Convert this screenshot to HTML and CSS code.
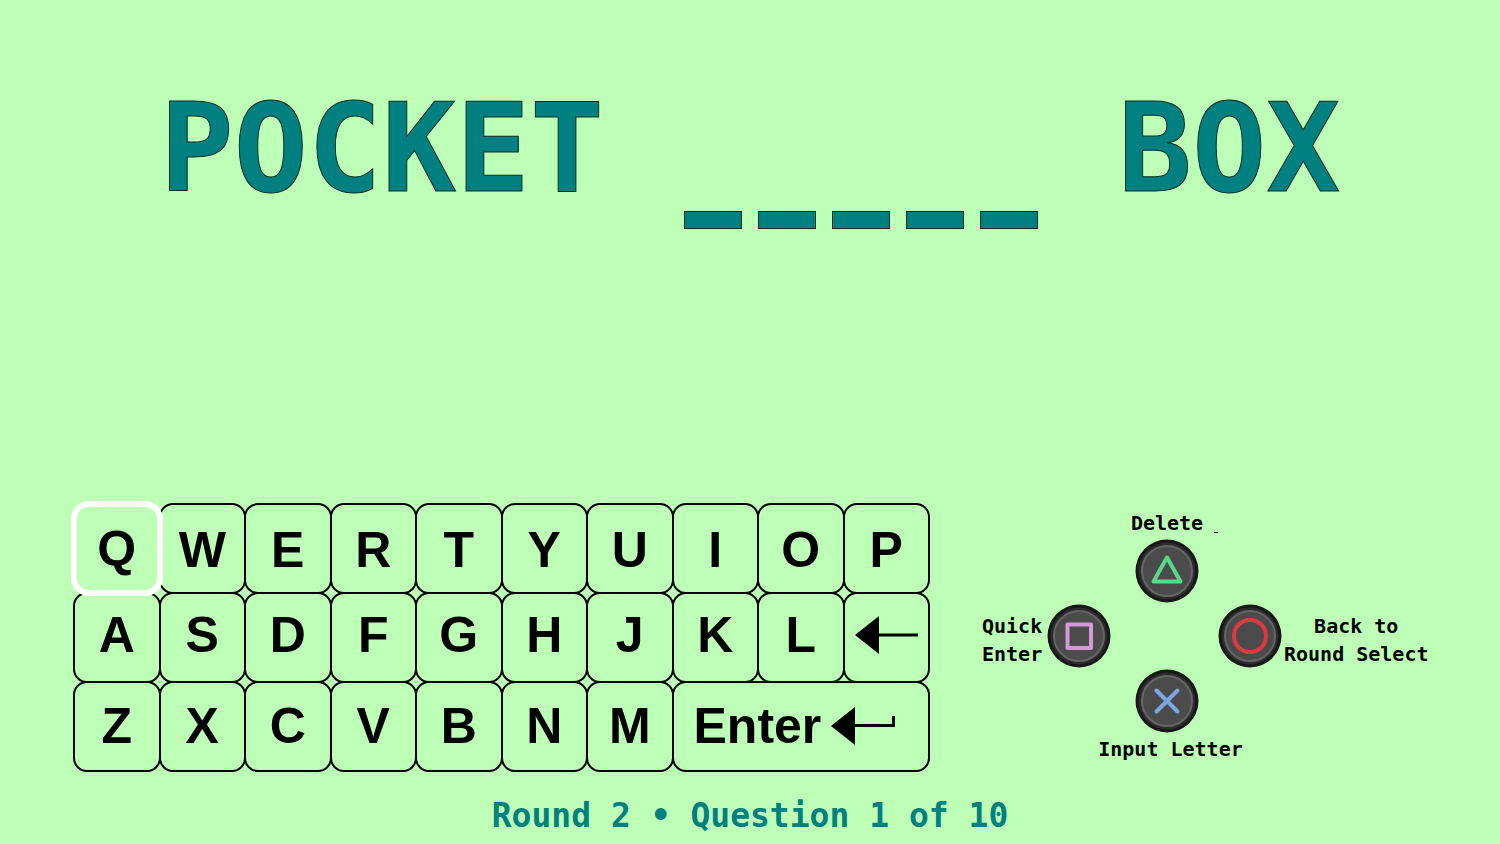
FILE: index.html
```html
<!DOCTYPE html>
<html lang="en">
<head>
  <meta charset="UTF-8" />
  <meta name="viewport" content="width=device-width, initial-scale=1.0"/>
  <title>Round 2</title>
  <link rel="stylesheet" href="styles.css">
</head>
<body>
  <h1 class="puzzle">
    <span>POCKET</span>
    <span class="blanks">
      <i class="blank"></i>
      <i class="blank"></i>
      <i class="blank"></i>
      <i class="blank"></i>
      <i class="blank"></i>
    </span>
    <span>BOX</span>
  </h1>

  <main class="board">
    <div class="keyboard">
      <div class="row row-top">
        <button class="key selected">Q</button>
        <button class="key">W</button>
        <button class="key">E</button>
        <button class="key">R</button>
        <button class="key">T</button>
        <button class="key">Y</button>
        <button class="key">U</button>
        <button class="key">I</button>
        <button class="key">O</button>
        <button class="key">P</button>
      </div>
      <div class="row row-middle">
        <button class="key">A</button>
        <button class="key">S</button>
        <button class="key">D</button>
        <button class="key">F</button>
        <button class="key">G</button>
        <button class="key">H</button>
        <button class="key">J</button>
        <button class="key">K</button>
        <button class="key">L</button>
        <button class="key" aria-label="Backspace">
          <svg class="arrow" width="63" height="38" viewBox="0 0 63 38">
            <path d="M0 19 L24 0 V38 Z"/>
            <path d="M24 17.5 H63 V20.5 H24 Z"/>
          </svg>
        </button>
      </div>
      <div class="row row-bottom">
        <button class="key">Z</button>
        <button class="key">X</button>
        <button class="key">C</button>
        <button class="key">V</button>
        <button class="key">B</button>
        <button class="key">N</button>
        <button class="key">M</button>
        <button class="key enter">Enter
          <svg class="arrow" width="64" height="38" viewBox="0 0 64 38">
            <path d="M0 19 L24 0 V38 Z"/>
            <path d="M24 17 H61 V9 H64 V20 H24 Z"/>
          </svg>
        </button>
      </div>
    </div>

    <div class="controls">
      <label class="center label-top" for="btnDelete">Delete<i class="tick"></i></label>
      <button class="pad center" id="btnDelete">
        <svg width="64" height="64" viewBox="0 0 64 64">
          <circle cx="32" cy="32" r="31.5" fill="#171717"/>
          <circle cx="32" cy="32" r="28.5" fill="#2b2b2b"/>
          <circle cx="32" cy="32" r="25" fill="#4b4b4b" stroke="#656565" stroke-width="2"/>
          <path d="M32 18.5 L45.5 42.5 H18.5 Z" fill="none" stroke="#55d98b" stroke-width="4" stroke-linejoin="round"/>
        </svg>
      </button>

      <label class="left" for="btnQuick">Quick<br>Enter</label>
      <button class="pad" id="btnQuick">
        <svg width="64" height="64" viewBox="0 0 64 64">
          <circle cx="32" cy="32" r="31.5" fill="#171717"/>
          <circle cx="32" cy="32" r="28.5" fill="#2b2b2b"/>
          <circle cx="32" cy="32" r="25" fill="#4b4b4b" stroke="#656565" stroke-width="2"/>
          <rect x="20.5" y="20.5" width="23.5" height="23.5" fill="none" stroke="#d399d8" stroke-width="4" stroke-linejoin="round"/>
        </svg>
      </button>
      <button class="pad pad-right" id="btnBack">
        <svg width="64" height="64" viewBox="0 0 64 64">
          <circle cx="32" cy="32" r="31.5" fill="#171717"/>
          <circle cx="32" cy="32" r="28.5" fill="#2b2b2b"/>
          <circle cx="32" cy="32" r="25" fill="#4b4b4b" stroke="#656565" stroke-width="2"/>
          <circle cx="32" cy="32" r="16" fill="none" stroke="#dc3b3f" stroke-width="4"/>
        </svg>
      </button>
      <label class="right" for="btnBack">Back to<br>Round Select</label>

      <button class="pad center" id="btnInput">
        <svg width="64" height="64" viewBox="0 0 64 64">
          <circle cx="32" cy="32" r="31.5" fill="#171717"/>
          <circle cx="32" cy="32" r="28.5" fill="#2b2b2b"/>
          <circle cx="32" cy="32" r="25" fill="#4b4b4b" stroke="#656565" stroke-width="2"/>
          <path d="M21.5 21.5 L42.5 42.5 M42.5 21.5 L21.5 42.5" fill="none" stroke="#7ba7e3" stroke-width="4" stroke-linecap="round"/>
        </svg>
      </button>
      <label class="center label-bottom" for="btnInput">Input Letter</label>
    </div>
  </main>

  <footer class="status">Round 2 • Question 1 of 10</footer>
</body>
</html>
```
FILE: styles.css
```css
* {
  box-sizing: border-box;
}
body {
  margin: 0;
  min-height: 100vh;
  padding: 69px 0 8px;
  display: flex;
  flex-direction: column;
  background-color: #bdffb6;
  color: #000;
  font-family: "DejaVu Sans Mono", monospace;
  font-weight: bold;
}
button {
  padding: 0;
  border: none;
  background: none;
  color: inherit;
  cursor: pointer;
}

/* puzzle line */
.puzzle {
  margin: 0;
  display: flex;
  justify-content: center;
  gap: 80px;
  font-size: 123px;
  line-height: 160px;
  color: #008080;
  -webkit-text-stroke: 1px #062b22;
}
.blanks {
  display: flex;
  align-items: flex-end;
  gap: 16px;
}
.blank {
  width: 58px;
  height: 18px;
  background-color: #008080;
  border: 1px solid #062b22;
}

/* on-screen keyboard */
.board {
  margin-top: auto;
  padding-left: 74px;
  display: flex;
  align-items: center;
  gap: 53px;
}
.keyboard {
  width: 57vw;
}
.row {
  display: grid;
  grid-template-columns: repeat(10, 1fr);
  grid-auto-rows: 89px;
}
.key {
  margin: -1px;
  display: flex;
  justify-content: center;
  align-items: center;
  border: 2px solid #000;
  border-radius: 14px;
  font: bold 50px "Liberation Sans", Arial, sans-serif;
}
.row-top .key {
  padding-top: 3px;
}
.row-middle .key {
  padding-bottom: 6px;
}
.row-bottom .key {
  padding-bottom: 2px;
}
.row-top .selected {
  z-index: 1;
  margin: -3px;
  padding: 0;
  border: 6px solid #fff;
  border-radius: 18px;
}
.row-bottom .enter {
  grid-column: span 3;
  justify-content: flex-start;
  gap: 10px;
  padding-left: 20px;
}
.arrow {
  flex: none;
}

/* controller hints */
.controls {
  padding-bottom: 4px;
  display: grid;
  grid-template-columns: 65px 64px 107px 64px auto;
  grid-template-rows: 30px 64px 66px 64px 30px;
  align-items: center;
  font-size: 20px;
  line-height: 28px;
}
.pad {
  display: flex;
  justify-content: center;
}
.center {
  grid-column: 2 / 5;
  padding-left: 5px;
  text-align: center;
}
.label-top {
  position: relative;
  align-self: start;
}
.label-bottom {
  align-self: end;
  padding-left: 12px;
}
.left {
  grid-column: 1;
  padding-top: 8px;
}
.pad-right {
  grid-column: 4;
}
.right {
  grid-column: 5;
  padding: 8px 0 0 2px;
  text-align: center;
}
.tick {
  position: absolute;
  right: 64px;
  bottom: 4px;
  width: 4px;
  height: 1px;
  background-color: #000;
}

.status {
  margin-top: 25px;
  text-align: center;
  font-size: 33px;
  line-height: 40px;
  color: #008080;
}
```
